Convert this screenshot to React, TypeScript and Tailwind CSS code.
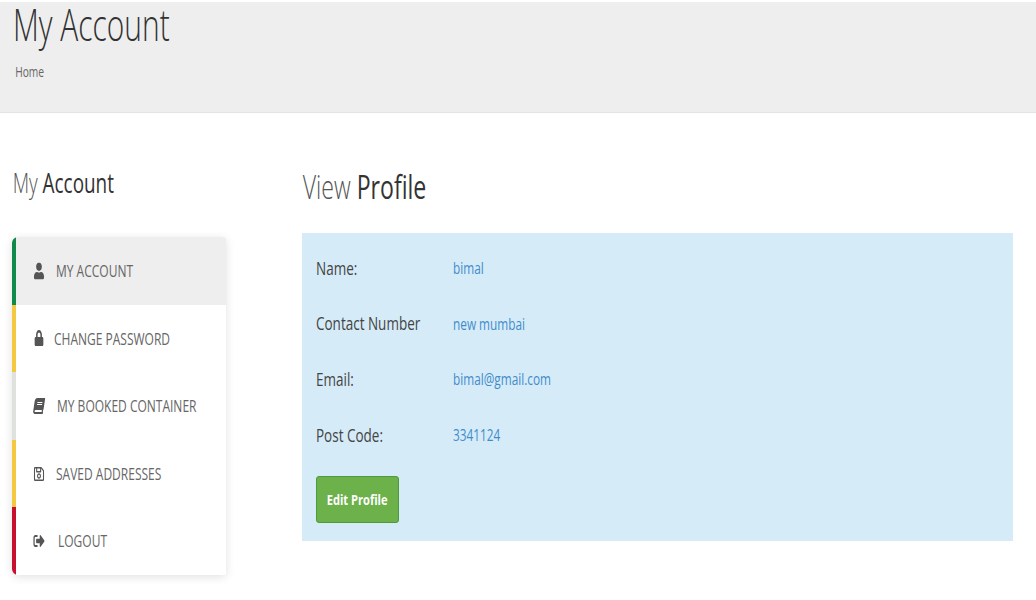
import { FaUser, FaLock, FaBook, FaRegSave, FaSignOutAlt } from "react-icons/fa";
import type { ReactNode } from "react";

const font = { fontFamily: '"Open Sans", sans-serif' };

function Row({ label, value }: { label: string; value: string }) {
  return (
    <div className="flex h-[55.7px] items-center">
      <div className="w-[137px] shrink-0 whitespace-nowrap">
        <span className="inline-block origin-left scale-x-[0.71] text-[19px] text-[#444]">{label}</span>
      </div>
      <span className="inline-block origin-left scale-x-[0.695] whitespace-nowrap text-[17px] text-[#428bca]">{value}</span>
    </div>
  );
}

function MenuItem({ icon, label, border, textX, active }: { icon: ReactNode; label: string; border: string; textX: string; active?: boolean }) {
  return (
    <div className={`flex h-[67.6px] items-center border-l-4 pl-[16px] ${border} ${active ? "bg-[#eeeeee]" : "bg-white"}`}>
      <span className="flex w-[13px] shrink-0 justify-center text-[16px] text-[#555]">{icon}</span>
      <span className={`inline-block origin-left scale-x-[0.706] whitespace-nowrap text-[17px] text-[#666] ${textX}`}>{label}</span>
    </div>
  );
}

export default function App() {
  return (
    <div style={font} className="h-[600px] w-[1036px] overflow-hidden bg-white">
      <header className="mt-[2px] h-[111px] border-b border-[#e4e4e4] bg-[#eeeeee] pl-[13px]">
        <h1 className="h-[44px] origin-left scale-x-[0.665] whitespace-nowrap text-[45px] font-light leading-[44px] text-[#333]">My Account</h1>
        <div className="mt-[16px] origin-left scale-x-[0.73] pl-[3px] text-[14px] leading-[20px] text-[#666]">Home</div>
      </header>

      <div className="flex pl-[12px] pr-[23px]">
        <aside className="w-[214px] shrink-0">
          <h3 className="mt-[53px] h-[34px] origin-left scale-x-[0.7] whitespace-nowrap pl-px text-[27px] font-light leading-[34px] text-[#333]">
            <span className="text-[#555]">My</span> <span className="font-normal">Account</span>
          </h3>
          <nav className="mt-[37px] overflow-hidden rounded-l-[6px] rounded-r-[3px] shadow-[0_2px_10px_rgba(0,0,0,0.12)]">
            <MenuItem active icon={<FaUser className="shrink-0 scale-x-[0.72] scale-y-[1.05]" />} label="MY ACCOUNT" border="border-[#0f8a4b]" textX="ml-[11px]" />
            <MenuItem icon={<FaLock className="shrink-0 scale-x-[0.62]" />} label="CHANGE PASSWORD" border="border-[#f5c842]" textX="ml-[9px]" />
            <MenuItem icon={<FaBook className="shrink-0 scale-x-[0.72] -skew-x-12" />} label="MY BOOKED CONTAINER" border="border-[#dfe2dc]" textX="ml-[12px]" />
            <MenuItem icon={<FaRegSave className="shrink-0 scale-x-[0.72]" />} label="SAVED ADDRESSES" border="border-[#f5c842]" textX="ml-[11px]" />
            <MenuItem icon={<FaSignOutAlt className="shrink-0 scale-x-[0.72]" />} label="LOGOUT" border="border-[#c8102e]" textX="ml-[13px]" />
          </nav>
        </aside>

        <main className="ml-[76px] flex-1">
          <h2 className="mt-[54px] h-[40px] origin-left scale-x-[0.7] whitespace-nowrap pl-px text-[33px] font-light leading-[40px] text-[#333]">
            <span className="text-[#555]">View</span> <span className="font-normal">Profile</span>
          </h2>
          <section className="mt-[26px] h-[308px] bg-[#d5ebf8] pl-[14px] pt-[7px]">
            <Row label="Name:" value="bimal" />
            <Row label="Contact Number" value="new mumbai" />
            <Row label="Email:" value="bimal@gmail.com" />
            <Row label="Post Code:" value="3341124" />
            <button className="mt-[13px] flex h-[47px] w-[83px] items-center justify-center rounded-[3px] border border-[#4c9a3a] bg-[#6cb14a] text-[15px] font-bold text-white">
              <span className="inline-block scale-x-[0.74] whitespace-nowrap">Edit Profile</span>
            </button>
          </section>
        </main>
      </div>
    </div>
  );
}
